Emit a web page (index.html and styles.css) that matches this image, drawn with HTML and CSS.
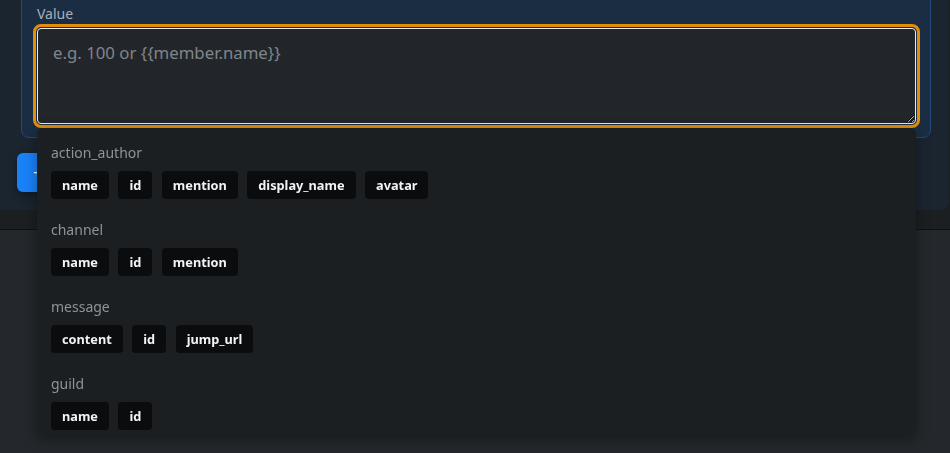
FILE: index.html
```html
<!DOCTYPE html>
<html lang="en">
<head>
<meta charset="utf-8">
<title>Value field</title>
<link rel="stylesheet" href="styles.css">
</head>
<body>
  <div class="top">
    <div class="card">
      <div class="panel">
        <label class="field-label" for="val">Value</label>
        <div class="field">
          <textarea id="val" class="value-input" placeholder="e.g. 100 or {{member.name}}" autofocus></textarea>
          <div class="suggest">
            <div class="group">
              <div class="group-name">action_author</div>
              <div class="chips">
                <span class="chip">name</span><span class="chip">id</span><span class="chip">mention</span><span class="chip">display_name</span><span class="chip">avatar</span>
              </div>
            </div>
            <div class="group">
              <div class="group-name">channel</div>
              <div class="chips">
                <span class="chip">name</span><span class="chip">id</span><span class="chip">mention</span>
              </div>
            </div>
            <div class="group">
              <div class="group-name">message</div>
              <div class="chips">
                <span class="chip">content</span><span class="chip">id</span><span class="chip">jump_url</span>
              </div>
            </div>
            <div class="group">
              <div class="group-name">guild</div>
              <div class="chips">
                <span class="chip">name</span><span class="chip">id</span>
              </div>
            </div>
          </div>
        </div>
      </div>
      <button class="add-btn" type="button" aria-label="Add field">+</button>
    </div>
  </div>
</body>
</html>
```

FILE: styles.css
```css
* { box-sizing: border-box; }

html, body {
  margin: 0;
  padding: 0;
}

body {
  background: #24272b;
  font-family: "Noto Sans", "Open Sans", sans-serif;
  color: #e9ecef;
  color-scheme: dark;
  overflow: hidden;
  height: 453px;
}

.top {
  height: 230px;
  background: #1c1f22;
  border-bottom: 1px solid #0e1012;
}

.card {
  margin-left: -12px;
  width: 961px;
  height: 210px;
  background: #1b2530;
  border-radius: 0 0 8px 8px;
  display: flex;
  flex-direction: column;
  align-items: flex-start;
}

.panel {
  margin-top: -10px;
  margin-left: 33px;
  width: 910px;
  padding: 12px 14px 13px 15px;
  background: #1a2d42;
  border: 1px solid #1d4a78;
  border-radius: 8px;
}

.field-label {
  display: block;
  font-size: 14px;
  line-height: 21px;
  color: #aab1b8;
  margin-bottom: 4px;
}

.field {
  position: relative;
  height: 96px;
}

.value-input {
  display: block;
  width: 879px;
  height: 96px;
  margin: 0;
  padding: 11px 14px 12px 15px;
  font-family: "Noto Sans", "Open Sans", sans-serif;
  font-size: 16.8px;
  line-height: 25px;
  color: #e9ecef;
  background: #222529;
  border: 1px solid #e9ecef;
  border-radius: 4px;
  outline: 3px solid #e38d0c;
  outline-offset: 1px;
  resize: vertical;
  caret-color: #ffffff;
}

.value-input::placeholder {
  color: #80858b;
  opacity: 1;
}

.suggest {
  position: absolute;
  left: 0;
  top: calc(100% + 4px);
  width: 879px;
  height: 307px;
  padding: 14px 14px;
  background: #1b1f22;
  border-radius: 6px;
  box-shadow: 0 4px 14px rgba(0, 0, 0, 0.35);
  overflow: hidden;
  z-index: 5;
}

.group {
  margin-bottom: 20px;
}

.group-name {
  font-size: 14px;
  line-height: 21px;
  color: #8c939a;
  margin-bottom: 8px;
}

.chips {
  display: flex;
  flex-wrap: wrap;
  gap: 9.5px;
}

.chip {
  display: inline-block;
  height: 28px;
  padding: 4px 11px;
  font-size: 12.75px;
  line-height: 20px;
  font-weight: 700;
  color: #f1f3f5;
  background: #0b0c0e;
  border-radius: 4px;
}

.add-btn {
  margin-top: 15px;
  margin-left: 29px;
  width: 110px;
  height: 39px;
  padding: 0 16px;
  text-align: left;
  font-family: "Noto Sans", "Open Sans", sans-serif;
  font-size: 16px;
  color: #ffffff;
  background: #1a82f8;
  border: none;
  border-radius: 6px;
  box-shadow: 0 4px 10px rgba(0, 0, 0, 0.35);
}
```
